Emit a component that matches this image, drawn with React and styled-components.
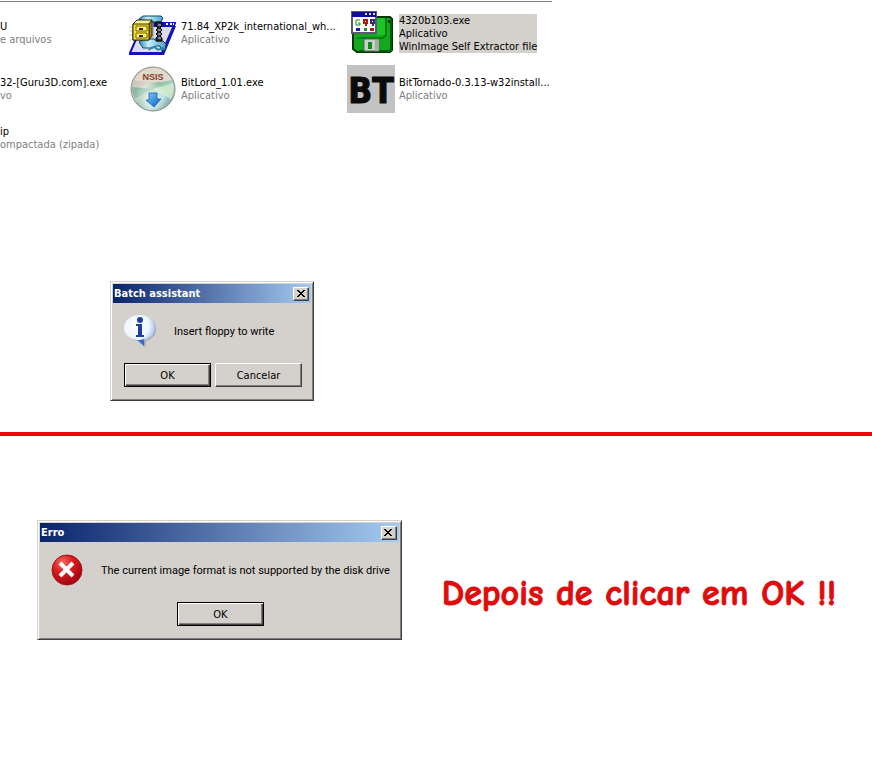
import React from "react";
import styled, { createGlobalStyle } from "styled-components";

const GlobalStyle = createGlobalStyle`
  * {
    box-sizing: border-box;
  }

  body {
    margin: 0;
    background: #fff;
    color: #000;
    font-family: Tahoma, "DejaVu Sans Condensed", "DejaVu Sans", sans-serif;
    font-size: 11px;
    line-height: 13px;
  }
`;

const ZipIcon = () => (
  <svg width="48" height="48" viewBox="0 0 48 48" aria-hidden="true">
    <defs>
      <linearGradient id="clamp" x1="0" y1="0" x2="1" y2="0">
        <stop offset="0" stopColor="#2a86ae" />
        <stop offset="0.35" stopColor="#c4f0ff" />
        <stop offset="1" stopColor="#4aa0c4" />
      </linearGradient>
    </defs>
    <path d="M14 14H46L33 44H1Z" fill="#dcdcee" stroke="#1414a8" strokeWidth="2" strokeLinejoin="round" />
    <path d="M15 13H47L45 18H13Z" fill="#1414c8" />
    <path d="M0 43H33L45 17H47L35 46H0Z" fill="#1414b8" />
    <path d="M37 15h2M41 15h2M44 15h1" stroke="#fff" strokeWidth="2" />
    <path d="M0 18h5M0 22h5M0 26h5M0 31h5" stroke="#c8d0d8" />
    <path d="M10 10L14 7H32L34 9L32 13H23V15H19V12H11Z" fill="url(#clamp)" stroke="#0c4a68" />
    <path d="M19 14H24V31H19Z" fill="#e4e8f4" stroke="#88a4b8" />
    <path d="M10 33L15 30H25L28 32H34L37 35L36 41H32L31 37H26L24 39H14Z" fill="url(#clamp)" stroke="#0c4a68" />
    <path d="M20 41C23 37 26 38 28 40C30 42 32 39 35 39" fill="none" stroke="#2a86ae" strokeWidth="2" />
    <path d="M27 13H33V17L31 19L33 21L31 23L33 25L31 27L33 29V32H27V29L29 27L27 25L29 23L27 21L29 19L27 17Z" fill="#283038" stroke="#000" />
    <path d="M29 16h3M29 21h3M29 25h3M29 29h3" stroke="#d8dce8" />
    <path d="M4 15L8 11H23L20 15V31H4Z" fill="#fff7a0" stroke="#302800" />
    <path d="M20 15L23 11V27L20 31Z" fill="#a88c00" stroke="#302800" />
    <path d="M4 15H20V31H4Z" fill="#ffe62e" stroke="#302800" />
    <path d="M7 17H18V22H7ZM7 24H18V29H7Z" fill="#fff27c" stroke="#706000" />
    <path d="M10 20h4M10 27h4" stroke="#302800" strokeWidth="2" />
  </svg>
);

const NsisIcon = () => (
  <svg width="48" height="48" viewBox="0 0 48 48" aria-hidden="true">
    <defs>
      <linearGradient id="disc" x1="0.1" y1="0.1" x2="0.9" y2="0.9">
        <stop offset="0" stopColor="#c9b9a6" />
        <stop offset="0.35" stopColor="#d8d6cf" />
        <stop offset="0.5" stopColor="#8fbfa0" />
        <stop offset="0.75" stopColor="#a9d5d9" />
        <stop offset="1" stopColor="#7da09a" />
      </linearGradient>
      <radialGradient id="discGlow" cx="0.46" cy="0.72" r="0.4">
        <stop offset="0" stopColor="#fff" />
        <stop offset="1" stopColor="#fff" stopOpacity="0" />
      </radialGradient>
      <linearGradient id="discArrow" x1="0" y1="0" x2="1" y2="1">
        <stop offset="0" stopColor="#7fd4ff" />
        <stop offset="1" stopColor="#0857b8" />
      </linearGradient>
    </defs>
    <circle cx="24" cy="24" r="22" fill="url(#disc)" stroke="#8c8f86" />
    <path d="M5 15A21 21 0 0 1 43 15C32 18 15 18 5 15Z" fill="#e2d8cc" />
    <path d="M24 24L44 18A21 21 0 0 1 42 34Z" fill="#d4ecc8" opacity="0.8" />
    <path d="M24 24L3 22A21 21 0 0 0 6 34Z" fill="#5ea98c" opacity="0.6" />
    <circle cx="24" cy="24" r="21" fill="url(#discGlow)" />
    <text x="24" y="15" textAnchor="middle" fontFamily="Liberation Sans, sans-serif" fontWeight="700" fontSize="9" fill="#8c3c30">NSIS</text>
    <path d="M20 28H28V34H32L25 42L17 35H20Z" fill="url(#discArrow)" stroke="#2475b8" />
  </svg>
);

const FloppyIcon = () => (
  <svg width="48" height="48" viewBox="0 0 48 48" aria-hidden="true">
    <path d="M8 8H43L45 10V41L43 43H10L6 40V10Z" fill="#14a81c" stroke="#033806" strokeWidth="2" />
    <path d="M30 9H39V26H30Z" fill="#1cc428" />
    <path d="M39 9V26L36 29H10" fill="none" stroke="#06800c" strokeWidth="2" />
    <path d="M44 11V42H12" fill="none" stroke="#045c0a" strokeWidth="2" />
    <path d="M41 11h2v3h-2z" fill="#022c04" />
    <path d="M17 30H32V42H17Z" fill="#ccd0cc" stroke="#486c4a" />
    <path d="M21 33h4v7h-4z" fill="#108c18" />
    <path d="M28 31h4v11h-4z" fill="#a8aca8" />
    <path d="M5 3H29V24H5Z" fill="#fff" stroke="#585878" strokeWidth="2" />
    <path d="M5 3H29V8H5Z" fill="#0c0c98" />
    <path d="M18 5h2M22 5h2M26 5h2" stroke="#d8d8ff" strokeWidth="2" />
    <path d="M13 11H9V16H13V14H11" fill="none" stroke="#188830" />
    <path d="M17 11H20V14H17ZM19 14V17" fill="none" stroke="#b01818" strokeWidth="2" />
    <path d="M24 11H27V14H24ZM26 14V17" fill="none" stroke="#303078" strokeWidth="2" />
    <path d="M9 19h4v3H9z" fill="#1818c0" />
    <path d="M17 19h3v3h-3z" fill="#189030" />
    <path d="M23 19h4v3h-4z" fill="#b81818" />
  </svg>
);

const BitTornadoIcon = () => (
  <svg width="48" height="48" viewBox="0 0 48 48" aria-hidden="true">
    <path d="M0 0h48v48H0z" fill="#c2c2c2" />
    <text x="24" y="38" textAnchor="middle" fontFamily="DejaVu Sans Condensed, DejaVu Sans, sans-serif" fontWeight="700" fontSize="35" fill="#0a0a0a" stroke="#0a0a0a">BT</text>
  </svg>
);

const InfoIcon = () => (
  <svg width="32" height="32" viewBox="0 0 32 32" aria-hidden="true">
    <defs>
      <radialGradient id="bubble" cx="0.4" cy="0.35" r="0.7">
        <stop offset="0" stopColor="#fff" />
        <stop offset="0.6" stopColor="#eef4ff" />
        <stop offset="1" stopColor="#84aae4" />
      </radialGradient>
    </defs>
    <path d="M17 1C8 1 1 7 1 14C1 20 7 25 15 26L21 32L22 26C28 24 32 20 32 14C32 7 26 1 17 1Z" fill="#8e96a6" opacity="0.7" />
    <path d="M16 0C7 0 0 6 0 13C0 19 5 24 13 25L20 31V25C27 24 31 19 31 13C31 6 25 0 16 0Z" fill="url(#bubble)" />
    <path d="M27 20C24 23 20 24 20 25V31L13 25C19 25 24 23 27 20Z" fill="#3c6ec0" />
    <circle cx="16" cy="5" r="3" fill="#1c3fa0" />
    <path d="M12 9H18V20H20V22H12V20H14V11H12Z" fill="#1c3fa0" />
  </svg>
);

const ErrorIcon = () => (
  <svg width="32" height="32" viewBox="0 0 32 32" aria-hidden="true">
    <defs>
      <radialGradient id="ball" cx="0.35" cy="0.25" r="0.8">
        <stop offset="0" stopColor="#f07068" />
        <stop offset="0.4" stopColor="#dc2020" />
        <stop offset="1" stopColor="#9c0010" />
      </radialGradient>
    </defs>
    <circle cx="16" cy="16" r="15" fill="url(#ball)" stroke="#a01018" />
    <path d="M9 9L22 22M22 9L9 22" stroke="#fff" strokeWidth="4" />
  </svg>
);

const CloseIcon = () => (
  <svg width="8" height="7" viewBox="0 0 8 7" aria-hidden="true" shapeRendering="crispEdges">
    <path d="M0 0h2v1h1v1h2V1h1V0h2v1H7v1H6v1H5v1h1v1h1v1h1v1H6V6H5V5H3v1H2v1H0V6h1V5h1V4h1V3H2V2H1V1H0z" fill="#000" />
  </svg>
);

const files = [
  { name: "U", lines: ["e arquivos"] },
  { name: "71.84_XP2k_international_wh...", lines: ["Aplicativo"], icon: <ZipIcon /> },
  {
    name: "4320b103.exe",
    lines: ["Aplicativo", "WinImage Self Extractor file"],
    icon: <FloppyIcon />,
    selected: true,
  },
  { name: "32-[Guru3D.com].exe", lines: ["vo"] },
  { name: "BitLord_1.01.exe", lines: ["Aplicativo"], icon: <NsisIcon /> },
  { name: "BitTornado-0.3.13-w32install...", lines: ["Aplicativo"], icon: <BitTornadoIcon /> },
  { name: "ip", lines: ["ompactada (zipada)"] },
];

const MessageBox = ({ title, icon, message, buttons }) => (
  <Dialog role="dialog" aria-label={title}>
    <TitleBar>
      <Title>{title}</Title>
      <CloseButton type="button" aria-label="Fechar">
        <CloseIcon />
      </CloseButton>
    </TitleBar>
    <DialogBody>
      <Message>
        {icon}
        <p>{message}</p>
      </Message>
      <ButtonRow>
        {buttons.map((label, index) => (
          <PushButton type="button" key={label} $primary={index === 0}>
            {label}
          </PushButton>
        ))}
      </ButtonRow>
    </DialogBody>
  </Dialog>
);

const App = () => {
  return (
    <>
      <GlobalStyle />
      <main>
        <Before>
          <FileList>
            {files.map((file) => (
              <FileItem key={file.name}>
                {file.icon}
                <FileText $selected={file.selected}>
                  <strong>{file.name}</strong>
                  {file.lines.map((line) => (
                    <span key={line}>{line}</span>
                  ))}
                </FileText>
              </FileItem>
            ))}
          </FileList>
          <AssistantArea>
            <MessageBox
              title="Batch assistant"
              icon={<InfoIcon />}
              message="Insert floppy to write"
              buttons={["OK", "Cancelar"]}
            />
          </AssistantArea>
        </Before>
        <After>
          <MessageBox
            title="Erro"
            icon={<ErrorIcon />}
            message="The current image format is not supported by the disk drive"
            buttons={["OK"]}
          />
          <Caption>Depois de clicar em OK !!</Caption>
        </After>
      </main>
    </>
  );
};

export default App;

const Before = styled.section`
  padding: 1px 0 31px;
  border-bottom: 4px solid #f00808;
`;

const FileList = styled.ul`
  display: grid;
  grid-template-columns: 129px 218px 1fr;
  grid-template-rows: 48px 48px 34px;
  row-gap: 8px;
  width: 552px;
  max-width: 100%;
  margin: 0;
  padding: 7px 0 0;
  border-top: 1px solid #808080;
  list-style: none;
`;

const FileItem = styled.li`
  display: flex;
  align-items: center;
  gap: 4px;
  white-space: nowrap;

  svg {
    flex: none;
  }
`;

const FileText = styled.div`
  display: flex;
  flex-direction: column;
  color: ${({ $selected }) => ($selected ? "#000" : "#808080")};
  background: ${({ $selected }) => ($selected ? "#d4d0cb" : "transparent")};

  strong {
    font-weight: 400;
    color: #000;
  }
`;

const AssistantArea = styled.div`
  padding: 126px 0 0 110px;
`;

const After = styled.section`
  display: flex;
  align-items: center;
  gap: 40px;
  padding: 84px 0 84px 37px;
`;

const Dialog = styled.div`
  flex: none;
  width: fit-content;
  padding: 1px;
  background: #d4d0cb;
  border: 1px solid;
  border-color: #d4d0c8 #404040 #404040 #d4d0c8;
  box-shadow: inset 1px 1px #fff, inset -1px -1px #808080;
`;

const TitleBar = styled.header`
  display: flex;
  align-items: center;
  justify-content: space-between;
  height: 19px;
  margin: 1px;
  padding: 0 2px 0 1px;
  background: linear-gradient(to right, #0a246a, #a6caf0);
`;

const Title = styled.h2`
  margin: 0;
  font-size: 11px;
  font-weight: 700;
  color: #fff;
`;

const CloseButton = styled.button`
  display: flex;
  align-items: center;
  justify-content: center;
  width: 16px;
  height: 14px;
  padding: 0 1px 1px 0;
  background: #d4d0cb;
  border: 1px solid;
  border-color: #fff #404040 #404040 #fff;
  box-shadow: inset -1px -1px #808080;
`;

const DialogBody = styled.div`
  padding: 11px 10px 12px 12px;
`;

const Message = styled.div`
  display: flex;
  align-items: center;
  gap: 18px;

  p {
    margin: 0;
    font-family: Tahoma, Roboto, sans-serif;
    white-space: nowrap;
  }
`;

const ButtonRow = styled.div`
  display: flex;
  justify-content: center;
  gap: 4px;
  margin-top: 16px;
`;

const PushButton = styled.button`
  width: 87px;
  height: 24px;
  padding: 0;
  font: inherit;
  color: #000;
  background: #d4d0cb;
  border: 1px solid;
  border-color: ${({ $primary }) => ($primary ? "#000" : "#fff #404040 #404040 #fff")};
  box-shadow: ${({ $primary }) =>
    $primary
      ? "inset 1px 1px #fff, inset -1px -1px #404040, inset -2px -2px #808080"
      : "inset -1px -1px #808080"};
`;

const Caption = styled.p`
  margin: 0;
  padding-top: 28px;
  font-family: "Comic Sans MS", "Comic Neue", "Open Sans", sans-serif;
  font-size: 36px;
  line-height: 48px;
  font-weight: 700;
  color: #e00c0c;
  -webkit-text-stroke: 1px #e00c0c;
  white-space: nowrap;
`;
